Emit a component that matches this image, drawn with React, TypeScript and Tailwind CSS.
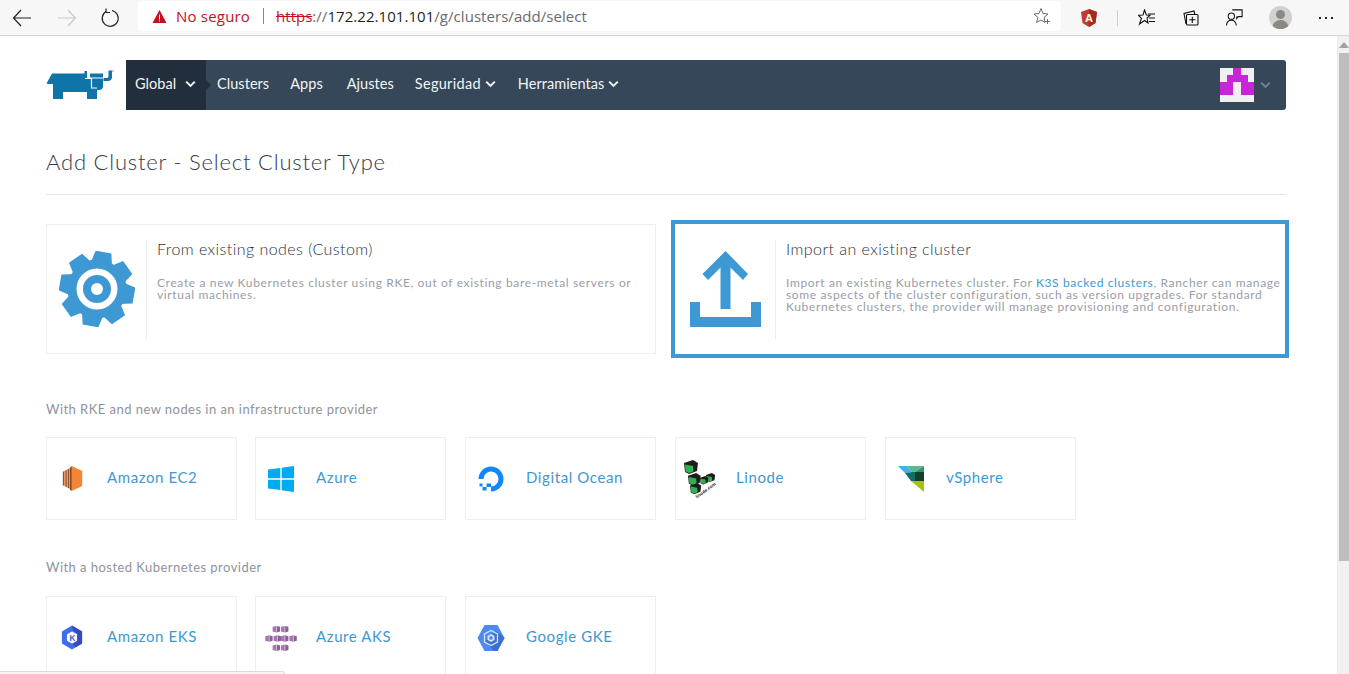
import React from "react";

const Chevron = ({ c = "#f4f5f6" }: { c?: string }) => (
  <svg width="11" height="8" viewBox="0 0 11 8" className="shrink-0">
    <path d="M1.2 1.6 5.5 5.9 9.8 1.6" fill="none" stroke={c} strokeWidth="2" />
  </svg>
);

const Gear = () => {
  const teeth = [0, 45, 90, 135, 180, 225, 270, 315];
  return (
    <svg width="76" height="76" viewBox="-38 -38 76 76" className="shrink-0">
      {teeth.map((a) => (
        <path key={a} transform={`rotate(${a + 10})`} d="M-8 -37.5 H8 L11 -24 H-11 Z" fill="#3d98d3" />
      ))}
      <circle r="25" fill="none" stroke="#3d98d3" strokeWidth="9" />
      <circle r="10" fill="none" stroke="#3d98d3" strokeWidth="8" />
    </svg>
  );
};

const Upload = () => (
  <svg width="72" height="76" viewBox="690 252 72 76" className="shrink-0">
    <path d="M690 303H700V318H751V303H761V328H690Z" fill="#3d98d3" />
    <path d="M725.5 252 748 275 743 281 730.5 268.5V310H720.5V268.5L708 281 702.500 275Z" fill="#3d98d3" />
  </svg>
);

const Rancher = () => (
  <svg width="68" height="34" viewBox="46 68 68 34" className="shrink-0">
    <path d="M46.5 83.500 52 73.500H84.500V71H87V77Q87 78.500 89 78.500H103V86Q103 90 99 90H97V99H87V92H63V99H53V84H48Z" fill="#0f75a8" />
    <path d="M85 78.500H91.500V88H97" fill="none" stroke="#fff" strokeWidth="1.200" />
    <path d="M90 73.500H103V77.500H90Z" fill="#0f75a8" />
    <path d="M103.500 78H107Q108.500 78 108.500 76V70.500H112V77Q112 81 107.500 81H103.500Z" fill="#0f75a8" />
    <circle cx="113" cy="71" r="1" fill="#9fc4da" />
  </svg>
);

const Ec2 = () => (
  <svg width="21" height="25" viewBox="0 0 26 30" preserveAspectRatio="none" className="ml-[4px]">
    <path d="M12 0 25 6V24L12 30Z" fill="#f58536" />
    <path d="M1 7 3 6V24L1 23ZM4 5.500 6 4.500V25.500L4 24.500ZM7 4 9 3V27L7 26Z" fill="#9d5025" />
    <path d="M10 2 12 0V30L10 28Z" fill="#6b3a19" />
    <path d="M3 6 4 5.500V24.500L3 24ZM6 4.500 7 4V26L6 25.500ZM9 3 10 2V28L9 27Z" fill="#e6883f" />
  </svg>
);

const Win = () => (
  <svg width="26" height="26" viewBox="0 0 26 26" className="ml-px">
    <path d="M0 3.500 12.300 2V12.200H0ZM13.700 1.800 26 0V12.200H13.700ZM0 13.800H12.300V24L0 22.500ZM13.700 13.800H26V26L13.700 24.200Z" fill="#00abf0" />
  </svg>
);

const Ocean = () => (
  <svg width="26" height="26" viewBox="0 0 26 26" className="ml-px">
    <path d="M13 25.500V20.500A7.500 7.500 0 1 0 5.500 13H.5A12.500 12.500 0 1 1 13 25.500Z" fill="#0f87ff" />
    <path d="M8.500 17.500H13V21H8.500ZM4.500 21H8.500V24.500H4.500ZM1.500 17.500H4.500V20.500H1.500Z" fill="#0f87ff" />
  </svg>
);

const Cube = ({ x, y, s }: { x: number; y: number; s: number }) => (
  <g transform={`translate(${x} ${y}) scale(${s})`}>
    <path d="M0 3 9 0 14 3 13 11 5 14 1 12Z" fill="#1d1d1d" />
    <path d="M1 4.500 9 6 9.500 11.500 5 13 1.500 11.500Z" fill="#2eb352" />
  </g>
);

const Linode = () => (
  <svg width="34" height="42" viewBox="0 0 34 42" className="-ml-[3px]">
    <Cube x={22} y={15} s={0.65} />
    <Cube x={16} y={18} s={0.6} />
    <Cube x={6} y={25} s={0.8} />
    <Cube x={4} y={15} s={0.9} />
    <Cube x={0} y={2} s={1} />
    <text x="0" y="0" transform="translate(13 40.500) rotate(-36)" fontSize="4.500" fontFamily="'Liberation Sans', sans-serif" fontWeight="700" fill="#222">linode.com</text>
  </svg>
);

const VSphere = () => (
  <svg width="26" height="26" viewBox="0 0 26 26" className="ml-px">
    <path d="M0 0H9L14 6 7 7Z" fill="#41b0ee" />
    <path d="M9 0H26L17 6H14Z" fill="#5cb98f" />
    <path d="M17 6 26 0V12H17Z" fill="#2f9472" />
    <path d="M7 7 14 6 17 6V15H13Z" fill="#0e6f66" />
    <path d="M17 6H26V15H17Z" fill="#11402f" />
    <path d="M13 15H26V26Z" fill="#a3c412" />
  </svg>
);

const Eks = () => (
  <svg width="22" height="25" viewBox="0 0 24 26" className="ml-[3px]">
    <path d="M12 0 23 6.500V19.500L12 26 1 19.500V6.500Z" fill="#3b6ff0" />
    <path d="M12 0 23 6.500V19.500L16 23.500 13 20 18 17V9L13 5Z" fill="#3c46bf" />
    <path d="M12 6.500 17.500 9.500V16.500L12 19.500 6.500 16.500V9.500Z" fill="#fff" />
    <text x="9.300" y="16.500" fontSize="9" fontWeight="700" fontFamily="'Liberation Sans', sans-serif" fill="#3b5ccf">K</text>
  </svg>
);

const Aks = () => {
  const pts = [
    [8, 1], [17, 1],
    [0, 11], [9, 11], [17, 11], [26, 11],
    [8, 21], [17, 21],
  ];
  return (
    <svg width="34" height="26" viewBox="0 0 34 28" className="-ml-[3px]">
      {pts.map(([x, y], i) => (
        <g key={i}>
          <path d={`M${x} ${y + 1}L${x + 4} ${y}V${y + 7}L${x} ${y + 6}Z`} fill="#a678b0" />
          <path d={`M${x + 4.500} ${y}L${x + 8} ${y + 1}V${y + 6}L${x + 4.500} ${y + 7}Z`} fill="#8d5f9a" />
        </g>
      ))}
    </svg>
  );
};

const Gke = () => (
  <svg width="28" height="26" viewBox="0 0 28 26">
    <path d="M7.500 0H20.500L27.500 13 20.500 26H7.500L.5 13Z" fill="#4b8bf0" />
    <path d="M19 6 27.500 13 20.500 26H17L8 16Z" fill="#3a70cf" />
    <path d="M14 5.500 20.500 9V17L14 20.500 7.500 17V9Z" fill="none" stroke="#d5e3fb" strokeWidth="1.300" />
    <path d="M14 9 17.500 11V15L14 17 10.500 15V11Z" fill="#d5e3fb" />
    <path d="M14 11 15.700 12V14L14 15 12.300 14V12Z" fill="#4b8bf0" />
  </svg>
);

const Provider = ({ icon, label }: { icon: React.ReactNode; label: string }) => (
  <div className="flex h-full w-[191px] items-center border border-[#edeef0] bg-white pl-[11px]">
    <div className="flex h-[42px] w-[49px] shrink-0 items-center">{icon}</div>
    <span className="pb-[2px] text-[15px] tracking-[0.6px] text-[#3d98d3]">{label}</span>
  </div>
);

const Divider = ({ ml }: { ml: string }) => <div className={`mr-[10px] h-[99px] w-px shrink-0 bg-[#eceef0] ${ml}`} />;

export default function App() {
  return (
    <div className="relative flex h-[674px] flex-col overflow-hidden bg-white font-['Lato',sans-serif]">
      <header className="flex h-[36px] shrink-0 items-start border-b border-[#d4d4d4] bg-[#f7f7f7] font-['Open_Sans',sans-serif]">
        <div className="flex h-[35px] w-[138px] shrink-0 items-center">
          <svg width="20" height="18" viewBox="0 0 20 18" className="ml-[12px]">
            <path d="M9 1 1.500 9 9 17M1.500 9H19" fill="none" stroke="#222" strokeWidth="1.200" />
          </svg>
          <svg width="20" height="18" viewBox="0 0 20 18" className="ml-[25px]">
            <path d="M11 1 18.500 9 11 17M18.500 9H1" fill="none" stroke="#c9c9c9" strokeWidth="1.200" />
          </svg>
          <svg width="20" height="20" viewBox="0 0 20 20" className="ml-[23px]">
            <path d="M6 3.500A8 8 0 1 0 12 2.500" fill="none" stroke="#222" strokeWidth="1.200" />
            <path d="M6 .5V4.500H10" fill="none" stroke="#222" strokeWidth="1.200" />
          </svg>
        </div>
        <div className="mt-px flex h-[30px] w-[923px] shrink-0 items-center rounded-[3px] bg-white pl-[14px] text-[15px]">
          <svg width="15" height="15" viewBox="0 0 15 15" className="shrink-0">
            <path d="M7.500 1 14.500 14H.5Z" fill="#c50f1f" />
            <path d="M7 5.500H8V10.500H7ZM7 11.500H8V12.500H7Z" fill="#fff" />
          </svg>
          <span className="ml-[9px] tracking-[0.2px] text-[#c50f1f]">No seguro</span>
          <span className="ml-[13px] mr-[12px] h-[16px] w-px bg-[#8a8a8a]" />
          <span className="text-[#c50f1f] line-through">https</span>
          <span className="tracking-[0.05px] text-[#6b6b6b]">://</span>
          <span className="tracking-[0.05px] text-[#1f1f1f]">172.22.101.101</span>
          <span className="tracking-[0.05px] text-[#6b6b6b]">/g/clusters/add/select</span>
          <svg width="18" height="18" viewBox="0 0 18 18" className="ml-auto mr-[10px] shrink-0">
            <path d="M8 1.500 10 6.500 15 7 11 10.500 12 15.500 8 13 3.500 15.500 5 10.500 1 7 6 6.500Z" fill="none" stroke="#6d6d6d" strokeWidth="1" />
            <path d="M14.500 12V17M12 14.500H17" stroke="#6d6d6d" strokeWidth="1" />
          </svg>
        </div>
        <div className="flex h-[35px] flex-1 items-center">
          <svg width="16" height="18" viewBox="0 0 16 18" className="ml-[20px]">
            <path d="M8 0 16 3 14.500 14 8 18 1.500 14 0 3Z" fill="#c53a2e" />
            <path d="M8 0 16 3 14.500 14 8 18Z" fill="#a32b21" />
            <text x="4" y="13" fontSize="11" fontWeight="700" fill="#fff" fontFamily="'Liberation Sans', sans-serif">A</text>
          </svg>
          <span className="ml-[20px] h-[16px] w-px bg-[#cfcfcf]" />
          <svg width="18" height="18" viewBox="0 0 18 18" className="ml-[20px]">
            <path d="M6.500 1 8.300 6 12 6.300 9 9 10 14 6.500 11.500 1.500 15 3.500 9.500 0.500 6.300 5 6Z" fill="#fff" stroke="#111" strokeWidth="1.100" />
            <path d="M10 5H17M11 9H17M11 12.500H17" stroke="#111" strokeWidth="1.100" />
          </svg>
          <svg width="16" height="16" viewBox="0 0 16 16" className="ml-[27px]">
            <path d="M3 14 1 3.500 11 1 11.800 4" fill="none" stroke="#111" strokeWidth="1.100" />
            <rect x="3.500" y="4.500" width="11.500" height="10.500" rx="1" fill="#f7f7f7" stroke="#111" strokeWidth="1.100" />
            <path d="M9.300 6.800V13M6.300 9.800H12.500" stroke="#111" strokeWidth="1.100" />
          </svg>
          <svg width="17" height="17" viewBox="0 0 19 19" className="ml-[27px]">
            <circle cx="6" cy="8" r="3.500" fill="none" stroke="#111" strokeWidth="1.200" />
            <path d="M.5 18.500Q1 12.500 6 12.500T11.500 18.500" fill="none" stroke="#111" strokeWidth="1.200" />
            <path d="M7 1H18V8.500H13.500L12 10.500V8.500" fill="none" stroke="#111" strokeWidth="1.200" />
          </svg>
          <div className="ml-[26px] h-[23px] w-[23px] overflow-hidden rounded-full bg-[#d3d1cf]">
            <div className="mx-auto mt-[4px] h-[9px] w-[9px] rounded-full bg-[#8c8984]" />
            <div className="mx-auto mt-[1px] h-[10px] w-[17px] rounded-t-full bg-[#8c8984]" />
          </div>
          <div className="ml-[27px] flex gap-[4px]">
            <span className="h-[2px] w-[2px] bg-[#222]" />
            <span className="h-[2px] w-[2px] bg-[#222]" />
            <span className="h-[2px] w-[2px] bg-[#222]" />
          </div>
        </div>
      </header>

      <div className="flex min-h-0 flex-1">
        <main className="min-w-0 flex-1 pl-[46px] pr-[51px] pt-[24px]">
          <div className="flex h-[50px] items-center">
            <div className="flex w-[80px] shrink-0 items-center">
              <Rancher />
            </div>
            <nav className="flex h-[50px] flex-1 items-center rounded-r-[3px] bg-[#354759] text-[14.5px] tracking-[0.05px] text-[#f4f5f6]">
              <div className="relative flex h-[50px] w-[80px] shrink-0 items-center gap-[9px] bg-[#222e3b] pb-[2px] pl-[9px]">
                Global
                <Chevron />
                <span className="absolute left-full top-1/2 -mt-[5px] border-y-[5px] border-l-[5px] border-y-transparent border-l-[#222e3b]" />
              </div>
              <span className="ml-[11px] pb-[2px]">Clusters</span>
              <span className="ml-[21px] pb-[2px]">Apps</span>
              <span className="ml-[24px] pb-[2px]">Ajustes</span>
              <span className="ml-[21px] flex items-center gap-[4px] pb-[2px] tracking-[0.3px]">Seguridad <Chevron /></span>
              <span className="ml-[22px] flex items-center gap-[4px] pb-[2px]">Herramientas <Chevron /></span>
              <div className="ml-auto mr-[15px] flex items-center gap-[6px]">
                <svg width="34" height="34" viewBox="0 0 34 34">
                  <rect width="34" height="34" fill="#f0f0f0" />
                  <path d="M13 0H21V7H28V14H34V27H21V14H13V27H0V14H7V7H13Z" fill="#c824d8" />
                </svg>
                <Chevron c="#6d8296" />
              </div>
            </nav>
          </div>

          <div className="flex h-[85px] items-center border-b border-[#e3e5e8] pt-[18px]">
            <h1 className="text-[22px] font-light tracking-[0.8px] text-[#363a4a]">Add Cluster - Select Cluster Type</h1>
          </div>

          <div className="mt-[29px] grid h-[130px] grid-cols-[610px_610px] gap-[19px]">
            <div className="flex items-center border border-[#edeef0] pl-[12px]">
              <Gear />
              <Divider ml="ml-[11px]" />
              <div className="h-[99px] min-w-0">
                <div className="-mt-px text-[16px] font-light leading-[20px] tracking-[0.45px] text-[#2c3040]">From existing nodes (Custom)</div>
                <p className="mt-[18px] whitespace-nowrap text-[12px] leading-[12px] tracking-[0.64px] text-[#9a9da6]">
                  Create a new Kubernetes cluster using RKE, out of existing bare-metal servers or<br />
                  virtual machines.
                </p>
              </div>
            </div>
            <div className="-mx-[4px] -my-[4px] flex items-center border-[4px] border-[#3d98d3] pl-[15px]">
              <Upload />
              <Divider ml="ml-[13px]" />
              <div className="h-[99px] min-w-0">
                <div className="-mt-px text-[16px] font-light leading-[20px] tracking-[0.45px] text-[#2c3040]">Import an existing cluster</div>
                <p className="mt-[18px] whitespace-nowrap text-[12px] leading-[12px] tracking-[0.64px] text-[#9a9da6]">
                  Import an existing Kubernetes cluster. For <span className="text-[#3d98d3]">K3S backed clusters</span>, Rancher can manage<br />
                  some aspects of the cluster configuration, such as version upgrades. For standard<br />
                  Kubernetes clusters, the provider will manage provisioning and configuration.
                </p>
              </div>
            </div>
          </div>

          <div className="flex h-[83px] items-end pb-[20px] text-[13px] leading-[16px] tracking-[0.46px] text-[#8f939c]">With RKE and new nodes in an infrastructure provider</div>
          <div className="grid h-[83px] grid-cols-[190px_191px_191px_191px_191px] gap-x-[19px]">
            <Provider icon={<Ec2 />} label="Amazon EC2" />
            <Provider icon={<Win />} label="Azure" />
            <Provider icon={<Ocean />} label="Digital Ocean" />
            <Provider icon={<Linode />} label="Linode" />
            <Provider icon={<VSphere />} label="vSphere" />
          </div>
          <div className="flex h-[76px] items-end pb-[21px] text-[13px] leading-[16px] tracking-[0.46px] text-[#8f939c]">With a hosted Kubernetes provider</div>
          <div className="grid h-[83px] grid-cols-[190px_191px_191px] gap-x-[19px]">
            <Provider icon={<Eks />} label="Amazon EKS" />
            <Provider icon={<Aks />} label="Azure AKS" />
            <Provider icon={<Gke />} label="Google GKE" />
          </div>
        </main>
        <aside className="flex w-[12px] shrink-0 flex-col border-l border-[#ececec] bg-[#f1f1f1] pl-[1px]">
          <svg width="10" height="6" viewBox="0 0 10 6" className="mt-[6px]">
            <path d="M5 0 10 6H0Z" fill="#a0a0a0" />
          </svg>
          <div className="mt-[5px] h-[508px] bg-[#bdbdbd]" />
        </aside>
      </div>

      <div className="absolute bottom-0 left-0 h-[3px] w-[285px] rounded-tr-[3px] border-r border-t border-[#d9d9d9] bg-[#f5f5f5]" />
    </div>
  );
}
